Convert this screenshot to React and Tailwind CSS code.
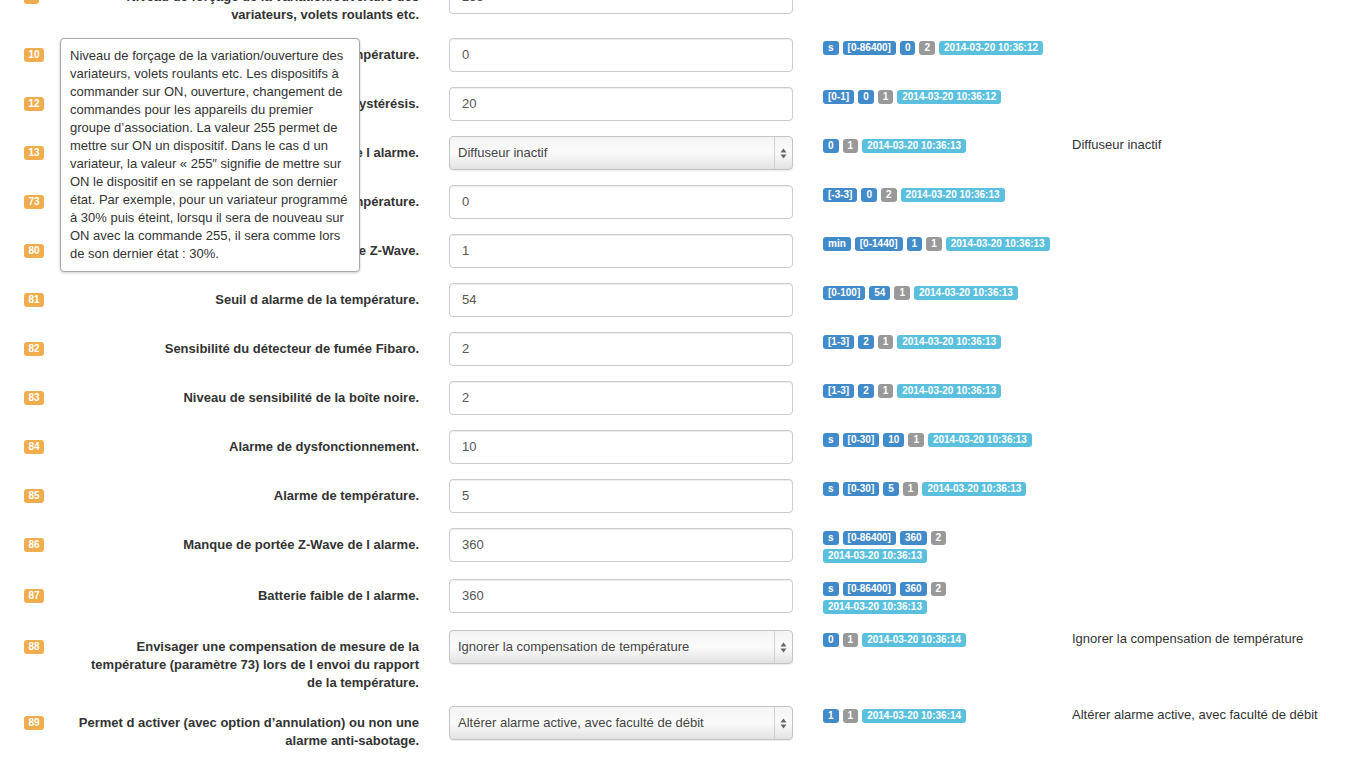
import React from 'react'

const BLUE = 'bg-[#428bca]'
const GRAY = 'bg-[#999999]'
const CYAN = 'bg-[#5bc0de]'

const ROWS = [
  {
    num: '9',
    label: 'Niveau de forçage de la variation/ouverture des variateurs, volets roulants etc.',
    value: '255',
    tags: [['[0-255]', BLUE], ['255', BLUE], ['1', GRAY], ['2014-03-20 10:36:12', CYAN]],
  },
  {
    num: '10',
    label: 'Intervalle des rapports de la température.',
    value: '0',
    tags: [['s', BLUE], ['[0-86400]', BLUE], ['0', BLUE], ['2', GRAY], ['2014-03-20 10:36:12', CYAN]],
  },
  {
    num: '12',
    label: 'Rapport de température : seuil d hystérésis.',
    value: '20',
    tags: [['[0-1]', BLUE], ['0', BLUE], ['1', GRAY], ['2014-03-20 10:36:12', CYAN]],
  },
  {
    num: '13',
    label: 'Mode de diffusion de l alarme.',
    select: 'Diffuseur inactif',
    tags: [['0', BLUE], ['1', GRAY], ['2014-03-20 10:36:13', CYAN]],
    desc: 'Diffuseur inactif',
  },
  {
    num: '73',
    label: 'Compensation de la mesure de température.',
    value: '0',
    tags: [['[-3-3]', BLUE], ['0', BLUE], ['2', GRAY], ['2014-03-20 10:36:13', CYAN]],
  },
  {
    num: '80',
    label: 'Signal lumineux du manque de portée Z-Wave.',
    value: '1',
    tags: [['min', BLUE], ['[0-1440]', BLUE], ['1', BLUE], ['1', GRAY], ['2014-03-20 10:36:13', CYAN]],
  },
  {
    num: '81',
    label: 'Seuil d alarme de la température.',
    value: '54',
    tags: [['[0-100]', BLUE], ['54', BLUE], ['1', GRAY], ['2014-03-20 10:36:13', CYAN]],
  },
  {
    num: '82',
    label: 'Sensibilité du détecteur de fumée Fibaro.',
    value: '2',
    tags: [['[1-3]', BLUE], ['2', BLUE], ['1', GRAY], ['2014-03-20 10:36:13', CYAN]],
  },
  {
    num: '83',
    label: 'Niveau de sensibilité de la boîte noire.',
    value: '2',
    tags: [['[1-3]', BLUE], ['2', BLUE], ['1', GRAY], ['2014-03-20 10:36:13', CYAN]],
  },
  {
    num: '84',
    label: 'Alarme de dysfonctionnement.',
    value: '10',
    tags: [['s', BLUE], ['[0-30]', BLUE], ['10', BLUE], ['1', GRAY], ['2014-03-20 10:36:13', CYAN]],
  },
  {
    num: '85',
    label: 'Alarme de température.',
    value: '5',
    tags: [['s', BLUE], ['[0-30]', BLUE], ['5', BLUE], ['1', GRAY], ['2014-03-20 10:36:13', CYAN]],
  },
  {
    num: '86',
    label: 'Manque de portée Z-Wave de l alarme.',
    value: '360',
    tags: [['s', BLUE], ['[0-86400]', BLUE], ['360', BLUE], ['2', GRAY]],
    tags2: [['2014-03-20 10:36:13', CYAN]],
  },
  {
    num: '87',
    label: 'Batterie faible de l alarme.',
    value: '360',
    tags: [['s', BLUE], ['[0-86400]', BLUE], ['360', BLUE], ['2', GRAY]],
    tags2: [['2014-03-20 10:36:13', CYAN]],
  },
  {
    num: '88',
    label: 'Envisager une compensation de mesure de la température (paramètre 73) lors de l envoi du rapport de la température.',
    select: 'Ignorer la compensation de température',
    tags: [['0', BLUE], ['1', GRAY], ['2014-03-20 10:36:14', CYAN]],
    desc: 'Ignorer la compensation de température',
  },
  {
    num: '89',
    label: 'Permet d activer (avec option d’annulation) ou non une alarme anti-sabotage.',
    select: 'Altérer alarme active, avec faculté de débit',
    tags: [['1', BLUE], ['1', GRAY], ['2014-03-20 10:36:14', CYAN]],
    desc: 'Altérer alarme active, avec faculté de débit',
  },
]

const TOOLTIP = [
  'Niveau de forçage de la variation/ouverture des',
  'variateurs, volets roulants etc. Les dispositifs à',
  'commander sur ON, ouverture, changement de',
  'commandes pour les appareils du premier',
  'groupe d’association. La valeur 255 permet de',
  'mettre sur ON un dispositif. Dans le cas d un',
  'variateur, la valeur « 255″ signifie de mettre sur',
  'ON le dispositif en se rappelant de son dernier',
  'état. Par exemple, pour un variateur programmé',
  'à 30% puis éteint, lorsqu il sera de nouveau sur',
  'ON avec la commande 255, il sera comme lors',
  'de son dernier état : 30%.',
]

function Tag({ text, color }) {
  return (
    <span
      className={`${color} block h-[14px] rounded-[3px] px-[5px] text-[10px] font-bold leading-[14px] text-white whitespace-nowrap`}
    >
      {text}
    </span>
  )
}

function TagLine({ tags }) {
  return (
    <div className="flex h-[18px] items-start gap-[4px] pt-[3px]">
      {tags.map(([t, c], i) => (
        <Tag key={i} text={t} color={c} />
      ))}
    </div>
  )
}

function FakeSelect({ value }) {
  return (
    <div className="flex h-[34px] w-full items-stretch rounded-[4px] border border-[#c4c4c4] bg-gradient-to-b from-[#f4f4f4] via-[#fbfbfb] to-[#e2e2e2] shadow-[0_1px_1px_rgba(0,0,0,0.08)]">
      <div className="flex flex-1 items-center pl-[8px] text-[13px] text-[#444]">{value}</div>
      <div className="flex w-[18px] items-center justify-center border-l border-[#d0d0d0]">
        <svg width="7" height="11" viewBox="0 0 7 11">
          <path d="M3.5 0.5 L6.5 4.5 L0.5 4.5 Z" fill="#666" />
          <path d="M3.5 10.5 L6.5 6.5 L0.5 6.5 Z" fill="#666" />
        </svg>
      </div>
    </div>
  )
}

function Row({ row }) {
  return (
    <div className="mb-[15px] flex">
      <div className="flex w-[60px] shrink-0 items-start pl-[24px] pt-[10px]">
        <span className="block h-[14px] rounded-[3px] bg-[#f0ad4e] px-[4.5px] text-[10px] font-bold leading-[14px] text-white">
          {row.num}
        </span>
      </div>
      <div className="mb-[-1px] w-[374px] shrink-0 px-[15px] pt-[8px] text-right text-[13px] font-bold leading-[18px] text-[#333]">
        {row.label}
      </div>
      <div className="w-[374px] shrink-0 px-[15px]">
        {row.select ? (
          <FakeSelect value={row.select} />
        ) : (
          <div className="flex h-[34px] w-full items-center rounded-[4px] border border-[#ccc] bg-white px-[12px] text-[13px] text-[#555] shadow-[inset_0_1px_1px_rgba(0,0,0,0.075)]">
            {row.value}
          </div>
        )}
      </div>
      <div className="w-[249px] shrink-0 px-[15px]">
        <TagLine tags={row.tags} />
        {row.tags2 && <TagLine tags={row.tags2} />}
      </div>
      <div className="flex-1 px-[15px] text-[13px] leading-[18px] text-[#333]">{row.desc}</div>
    </div>
  )
}

export default function App() {
  return (
    <div className="h-[761px] w-full overflow-hidden bg-white font-['Liberation_Sans',Arial,sans-serif]">
      <div className="relative mt-[-20px]">
        {ROWS.map((row) => (
          <Row key={row.num} row={row} />
        ))}

        {/* popover over the labels */}
        <div className="absolute left-[60px] top-[58px] w-[300px] rounded-[4px] border border-[#a9a9a9] bg-white px-[9px] pb-[8px] pt-[8px] text-[13px] leading-[18px] text-[#333] shadow-[0_1px_3px_rgba(0,0,0,0.2)]">
          {TOOLTIP.map((line, i) => (
            <div key={i} className="whitespace-nowrap">
              {line}
            </div>
          ))}
        </div>
      </div>
    </div>
  )
}
